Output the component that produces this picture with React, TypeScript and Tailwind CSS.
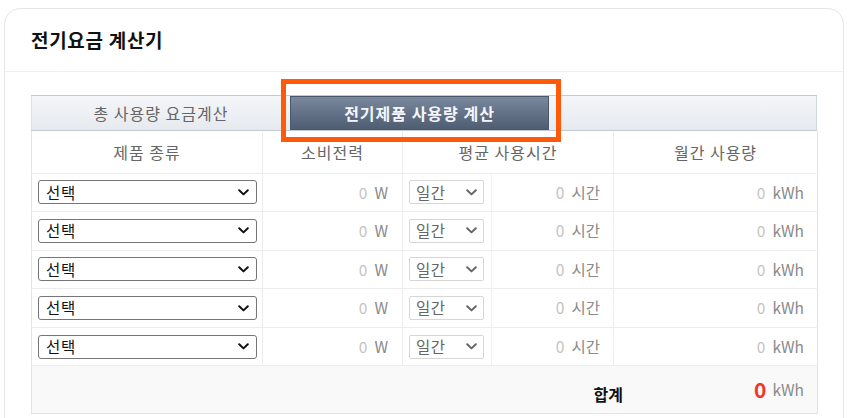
import React from "react";

const font = { fontFamily: '"Noto Sans CJK KR", "Noto Sans", sans-serif' };

function Chevron({ color }: { color: string }) {
  return (
    <svg width="11" height="7" viewBox="0 0 11 7" className="pointer-events-none">
      <path d="M1.2 1.2 L5.5 5.4 L9.8 1.2" fill="none" stroke={color} strokeWidth="2" strokeLinecap="round" strokeLinejoin="round" />
    </svg>
  );
}

function Value({ unit }: { unit: string }) {
  return (
    <>
      <span className="text-[#c4c4c4] mr-[7px]">0</span>
      <span className="text-[#8a8a8a]">{unit}</span>
    </>
  );
}

function Row() {
  return (
    <tr className="h-[38.6px] border-b border-[#ececec]">
      <td className="pl-[6px] pr-[6px] border-r border-[#ececec]">
        <div className="relative w-[219px] h-[24px] border border-[#767676] rounded-[3px] bg-white flex items-center pl-[7px] pr-[7px]">
          <span className="text-[15.5px] text-[#111] leading-none flex-1 tracking-[0.8px]">선택</span>
          <Chevron color="#111" />
        </div>
      </td>
      <td className="text-right pr-[14px] border-r border-[#ececec] text-[15.5px]">
        <Value unit="W" />
      </td>
      <td className="pl-[6px] border-r border-[#f0f0f0]">
        <div className="w-[75px] h-[24px] border border-[#d6d6d6] rounded-[2px] bg-white flex items-center pl-[6px] pr-[6px]">
          <span className="text-[15.5px] text-[#666] leading-none flex-1 tracking-[0.5px]">일간</span>
          <Chevron color="#666" />
        </div>
      </td>
      <td className="text-right pr-[13px] border-r border-[#ececec] text-[15.5px]">
        <Value unit="시간" />
      </td>
      <td className="text-right pr-[13px] text-[15.5px]">
        <Value unit="kWh" />
      </td>
    </tr>
  );
}

export default function App() {
  return (
    <div className="w-[855px] h-[418px] bg-white overflow-hidden pt-[8px] pl-[4px] pr-[11px]" style={font}>
      <div className="relative h-[430px] border border-[#e6e6e6] rounded-t-[16px] bg-white">
        <div className="h-[63px] border-b border-[#efefef] pl-[26px] flex items-center">
          <h1 className="text-[19px] font-bold text-[#111] tracking-[0.7px]">전기요금 계산기</h1>
        </div>
        <div className="pl-[26px] pt-[23px]">
          <div className="relative w-[786px]">
            <div className="h-[36px] flex border-t border-b border-[#c3cad4] bg-gradient-to-b from-[#f4f6f9] to-[#e6eaef]">
              <div className="w-[259px] flex items-center justify-center text-[16px] tracking-[1px] text-[#666] border-l border-[#dde1e6]">
                총 사용량 요금계산
              </div>
              <div className="w-[259px] flex items-center justify-center text-[16px] tracking-[1px] font-bold text-[#f4f6fa] bg-gradient-to-b from-[#7a889d] to-[#4f5d73] border border-[#4a576b]">
                전기제품 사용량 계산
              </div>
              <div className="flex-1 border-r border-[#d3d8df]" />
            </div>
            <div className="absolute left-[250px] top-[-16px] w-[280px] h-[63px] border-[5px] border-[#ff5a0a] pointer-events-none" />
            <table className="w-[786px] table-fixed border-collapse border-l border-r border-[#e3e3e3]">
              <colgroup>
                <col className="w-[231px]" />
                <col className="w-[140px]" />
                <col className="w-[89px]" />
                <col className="w-[122px]" />
                <col className="w-[204px]" />
              </colgroup>
              <thead>
                <tr className="h-[42px] border-b border-[#ececec]">
                  <th className="font-normal text-[16px] tracking-[1px] text-[#666] border-r border-[#ececec]">제품 종류</th>
                  <th className="font-normal text-[16px] tracking-[1px] text-[#666] border-r border-[#ececec]">소비전력</th>
                  <th colSpan={2} className="font-normal text-[16px] tracking-[1px] text-[#666] border-r border-[#ececec]">평균 사용시간</th>
                  <th className="font-normal text-[16px] tracking-[1px] text-[#666]">월간 사용량</th>
                </tr>
              </thead>
              <tbody>
                <Row />
                <Row />
                <Row />
                <Row />
                <Row />
                <tr className="h-[48px] bg-[#f9f9f9] border-b border-[#e3e3e3]">
                  <td colSpan={5} className="pr-[13px]">
                    <div className="flex items-center justify-end">
                      <span className="text-[16px] font-bold text-[#111] pt-[9px] mr-[131px]">합계</span>
                      <span className="text-[21px] font-bold text-[#f0382a] leading-none">0</span>
                      <span className="text-[15.5px] text-[#8a8a8a] ml-[6px] leading-none">kWh</span>
                    </div>
                  </td>
                </tr>
              </tbody>
            </table>
          </div>
        </div>
      </div>
    </div>
  );
}
